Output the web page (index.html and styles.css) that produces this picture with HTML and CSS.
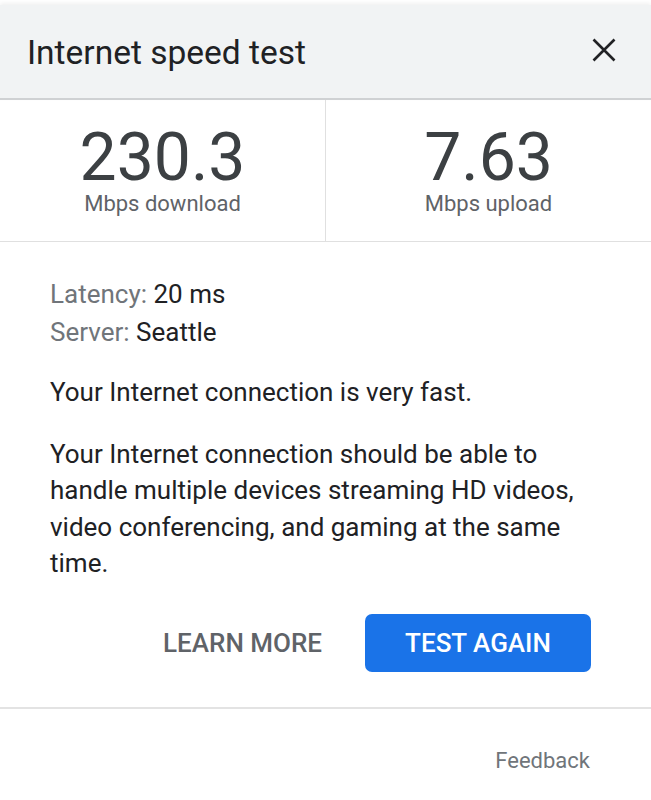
FILE: index.html
```html
<!DOCTYPE html>
<html>
<head>
<meta charset="utf-8">
<link rel="stylesheet" href="styles.css">
</head>
<body>
<div class="card">
  <div class="header">
    <div class="title">Internet speed test</div>
    <svg class="close" width="24" height="24" viewBox="0 0 24 24"><path d="M1.5 1.5L22.5 22.5M22.5 1.5L1.5 22.5" stroke="#202124" stroke-width="2.6" fill="none"/></svg>
  </div>
  <div class="stats">
    <div class="stat">
      <div class="num">230.3</div>
      <div class="unit">Mbps download</div>
    </div>
    <div class="stat">
      <div class="num">7.63</div>
      <div class="unit">Mbps upload</div>
    </div>
  </div>
  <div class="body">
    <div class="meta">
      <div><span class="label">Latency:</span> 20 ms</div>
      <div><span class="label">Server:</span> Seattle</div>
    </div>
    <p class="summary">Your Internet connection is very fast.</p>
    <p class="desc">Your Internet connection should be able to handle multiple devices streaming HD videos, video conferencing, and gaming at the same time.</p>
    <div class="actions">
      <button class="btn-text">LEARN MORE</button>
      <button class="btn-primary">TEST AGAIN</button>
    </div>
  </div>
  <div class="footer">
    <span class="feedback">Feedback</span>
  </div>
</div>
</body>
</html>
```
FILE: styles.css
```css
html, body {
  margin: 0;
  padding: 0;
  background: #ffffff;
}
body {
  font-family: Roboto, "Noto Sans", Arial, sans-serif;
  color: #202124;
}
.card {
  width: 651px;
  padding-top: 5px;
}
.header {
  height: 95px;
  background: #f1f3f4;
  border-bottom: 2px solid #cfd1d3;
  box-sizing: border-box;
  display: flex;
  align-items: center;
  justify-content: space-between;
  padding: 0 35px 0 27px;
  box-shadow: 0 -2px 4px rgba(0,0,0,0.06);
}
.title {
  font-size: 33.5px;
  line-height: 40px;
  padding-top: 3px;
  color: #202124;
}
.close {
  display: block;
  margin-top: -3px;
}
.stats {
  display: flex;
  height: 142px;
  box-sizing: border-box;
  border-bottom: 1px solid #e0e0e0;
}
.stat {
  flex: 1;
  display: flex;
  flex-direction: column;
  align-items: center;
  padding-top: 25px;
}
.stat + .stat {
  border-left: 1px solid #e0e0e0;
}
.num {
  font-size: 66px;
  line-height: 66px;
  color: #3c4043;
}
.unit {
  font-size: 22px;
  line-height: 26px;
  color: #5f6368;
}
.body {
  padding: 34px 50px 0 50px;
  font-size: 26px;
}
.meta {
  line-height: 37.5px;
}
.label {
  color: #70757a;
}
.summary {
  margin: 23px 0 0 0;
  line-height: 37.5px;
}
.desc {
  margin: 24px 0 0 0;
  line-height: 36.5px;
}
.actions {
  display: flex;
  justify-content: flex-end;
  align-items: center;
  gap: 43px;
  margin-top: 32px;
  padding-right: 10px;
  padding-bottom: 35px;
}
.btn-text, .btn-primary {
  font-family: Roboto, "Noto Sans", Arial, sans-serif;
  font-size: 26px;
  font-weight: 500;
  border: none;
  cursor: pointer;
}
.btn-text {
  background: none;
  color: #5f6368;
  padding: 0;
}
.btn-primary {
  background: #1a73e8;
  color: #ffffff;
  width: 226px;
  height: 58px;
  border-radius: 7px;
}
.footer {
  border-top: 2px solid #e3e3e3;
  display: flex;
  justify-content: flex-end;
  padding: 39px 61px 0 0;
}
.feedback {
  font-size: 22px;
  color: #70757a;
}
```
